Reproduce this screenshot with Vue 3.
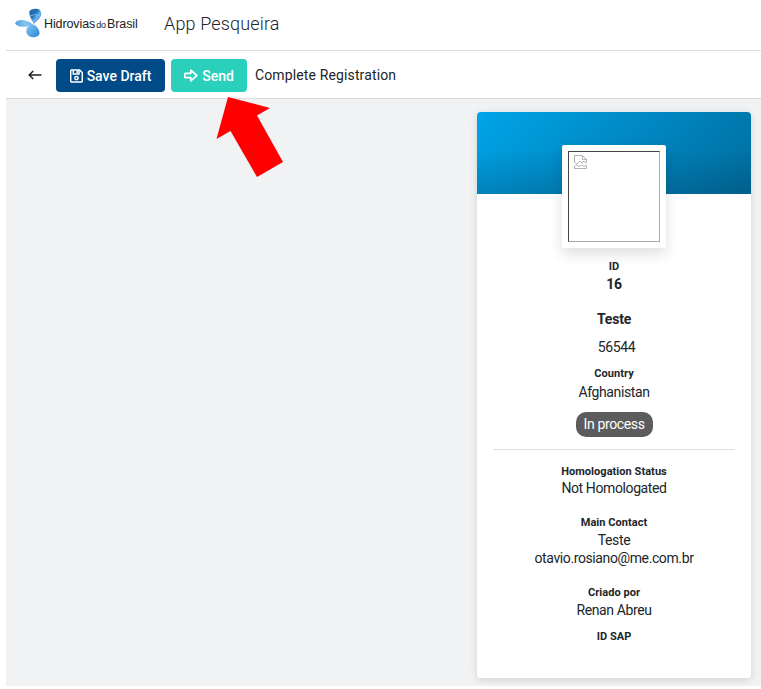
<script setup>
const identity = [
  { text: 'ID', kind: 'label' },
  { text: '16', kind: 'value strong' },
  { text: 'Teste', kind: 'value strong name' },
  { text: '56544', kind: 'value code' },
  { text: 'Country', kind: 'label country' },
  { text: 'Afghanistan', kind: 'value spaced' },
]
const details = [
  { key: 'status', label: 'Homologation Status', values: ['Not Homologated'] },
  { key: 'contact', label: 'Main Contact', values: ['Teste', 'otavio.rosiano@me.com.br'] },
  { key: 'author', label: 'Criado por', values: ['Renan Abreu'] },
  { key: 'sap', label: 'ID SAP', values: [] },
]
</script>

<template>
  <div class="page">
    <header class="header">
      <svg class="logo-mark" viewBox="0 0 28 30">
        <defs>
          <linearGradient id="bladeTop" x1="0" y1="0" x2="1" y2="1">
            <stop offset="0" stop-color="#1d65a8" />
            <stop offset=".4" stop-color="#2673b5" />
            <stop offset=".6" stop-color="#69b5ed" />
            <stop offset="1" stop-color="#1f6db5" />
          </linearGradient>
          <linearGradient id="bladeLeft" x1="0" y1="0" x2="1" y2="0">
            <stop offset="0" stop-color="#4ba1e4" />
            <stop offset=".55" stop-color="#86c3f2" />
            <stop offset="1" stop-color="#6fb4ee" />
          </linearGradient>
          <linearGradient id="bladeBottom" x1="0" y1="0" x2="1" y2="1">
            <stop offset="0" stop-color="#8cc8f4" />
            <stop offset="1" stop-color="#2385d5" />
          </linearGradient>
        </defs>
        <path d="M14.500 3C18-.5 26 0 26.300 5C26.500 10 22 13 18.500 16C18 12 13.500 9 14.500 3Z" fill="url(#bladeTop)" />
        <path d="M0 15.500C2 10.500 11 11 18 16.500C13 18 12 19 7 18.800C4 18.500 1 17.500 0 15.500Z" fill="url(#bladeLeft)" />
        <path d="M17 16C21 17 25 21 24.500 26C22 31 13 30 11.500 25C10.500 22 12 18 17 16Z" fill="url(#bladeBottom)" />
        <path d="M15 8Q20 5 25 8" fill="none" stroke="#8cc8f4" stroke-width=".7" />
      </svg>
      <span class="brand">Hidrovias<small>do</small>Brasil</span>
      <span class="app-name">App Pesqueira</span>
    </header>

    <div class="toolbar">
      <svg class="back" viewBox="0 0 14 10">
        <path d="M13.500 5H1.500M5.200 1L1.200 5L5.200 9" fill="none" stroke="#222" stroke-width="1.500" />
      </svg>
      <button class="btn save">
        <svg class="save-icon" viewBox="0 0 13 14" fill="none" stroke="#fff" stroke-width="1.500">
          <path d="M1.700 1H9.600L12.300 3.700V12Q12.300 13 11.300 13H1.700Q.7 13 .7 12V2Q.7 1 1.700 1Z" />
          <path d="M3.300 1V5H9V1M7.200 1.500V4" />
          <circle cx="6.500" cy="9.100" r="1.700" />
        </svg>
        <span>Save Draft</span>
      </button>
      <button class="btn send">
        <svg class="send-icon" viewBox="0 0 14 13">
          <path d="M1.600 4.300H6.800V1.200L12.800 6.500L6.800 11.800V8.700H1.600Q.8 8.700 .8 7.900V5.100Q.8 4.300 1.600 4.300Z" fill="none" stroke="#fff" stroke-width="1.700" stroke-linejoin="round" />
        </svg>
        <span>Send</span>
      </button>
      <span class="title">Complete Registration</span>
      <svg class="pointer" viewBox="0 0 68 82">
        <path d="M12 0L54 11L41 18.500L67 65L41 80L14.500 34L.5 42Z" fill="#f00" />
      </svg>
    </div>

    <main class="content">
      <section class="card">
        <div class="banner">
          <div class="avatar">
            <div class="picture">
              <svg class="broken" viewBox="0 0 13 15" fill="none" stroke="#b4b4b4" stroke-width="1">
                <path d="M.5 7.500V.5H8.500L12.500 4.500V8M8.500 .5V4.500H12.500M.5 7.500L3 9L6 6L8 8L10 6L12.500 8M.5 13.500V11.500L3 10L5 11.500L7.500 10L10 11.500L12.500 10.500V13.500Z" />
              </svg>
            </div>
          </div>
        </div>
        <div class="info">
          <div v-for="row in identity" :key="row.kind" :class="row.kind">{{ row.text }}</div>
          <span class="badge">In process</span>
          <hr class="rule">
          <div v-for="group in details" :key="group.key" class="group" :class="group.key">
            <div class="label">{{ group.label }}</div>
            <div v-for="value in group.values" :key="value" class="value">{{ value }}</div>
          </div>
        </div>
      </section>
    </main>
  </div>
</template>

<style>
body {
  margin: 0;
  background: #fff;
}
</style>

<style scoped>
.page {
  box-sizing: border-box;
  height: 689px;
  padding: 0 0 3px 6px;
  display: flex;
  flex-direction: column;
  overflow: hidden;
  font-family: Roboto, "Liberation Sans", sans-serif;
  color: #212529;
}
.header {
  box-sizing: border-box;
  height: 51px;
  flex: none;
  display: flex;
  align-items: center;
  padding: 0 0 4px 9px;
  border-bottom: 1px solid #dcdddf;
  white-space: nowrap;
}
.logo-mark {
  width: 28px;
  height: 30px;
}
.brand {
  box-sizing: border-box;
  width: 121px;
  padding: 2px 0 0 1px;
  font-family: "Liberation Sans", Arial, sans-serif;
  font-size: 12.500px;
  letter-spacing: -0.100px;
  color: #222;
}
.brand small {
  font-size: 9px;
  margin: 0 1px;
}
.app-name {
  font-size: 18px;
  font-weight: 300;
  letter-spacing: 0.150px;
}
.toolbar {
  position: relative;
  z-index: 2;
  box-sizing: border-box;
  height: 48px;
  flex: none;
  display: flex;
  align-items: center;
  padding-left: 22px;
  border-bottom: 1px solid #d9dbdd;
  white-space: nowrap;
}
.back {
  width: 14px;
  height: 10px;
  margin: 1px 14px 0 0;
}
.btn {
  box-sizing: border-box;
  height: 33px;
  margin: 2px 6px 0 0;
  padding: 0;
  border: 0;
  border-radius: 4px;
  display: flex;
  align-items: center;
  justify-content: center;
  gap: 4px;
  font: 500 14px Roboto, sans-serif;
  color: #fff;
}
.save {
  width: 109px;
  background: #004b87;
}
.send {
  width: 76px;
  background: #2bd0bc;
}
.save-icon {
  width: 13px;
  height: 14px;
}
.send-icon {
  width: 14px;
  height: 13px;
}
.title {
  margin-left: 2px;
  font-size: 14px;
  letter-spacing: 0.130px;
}
.pointer {
  position: absolute;
  left: 209.500px;
  top: 46px;
  width: 68px;
  height: 82px;
}
.content {
  flex: 1;
  display: flex;
  justify-content: flex-end;
  padding: 13px 10px 8px 0;
  background: #f1f2f4;
}
.card {
  width: 274px;
  border-radius: 4px;
  background: #fff;
  box-shadow: 0 2px 8px rgba(0, 0, 0, 0.13);
}
.banner {
  box-sizing: border-box;
  height: 82px;
  padding: 33px 0 0 85px;
  border-radius: 4px 4px 0 0;
  background: linear-gradient(180deg, transparent 45%, rgba(0, 35, 60, 0.180)), linear-gradient(135deg, #00a5e9, #006c9d);
}
.avatar {
  box-sizing: border-box;
  width: 104px;
  height: 103px;
  padding: 6px;
  border-radius: 2px;
  background: #fff;
  box-shadow: 0 6px 14px rgba(0, 0, 0, 0.13);
}
.picture {
  box-sizing: border-box;
  height: 91px;
  padding: 3px 5px;
  border: 1px solid #aaa;
  border-top-color: #444;
  border-left-color: #444;
}
.broken {
  display: block;
  width: 13px;
  height: 15px;
}
.info {
  display: flex;
  flex-direction: column;
  align-items: center;
  padding: 65px 16px 0;
  text-align: center;
}
.label {
  font-size: 11px;
  font-weight: 700;
  line-height: 16px;
  letter-spacing: 0.050px;
}
.value {
  font-size: 14px;
  line-height: 18px;
  letter-spacing: -0.390px;
}
.strong {
  font-weight: 700;
  letter-spacing: -0.200px;
}
.name {
  margin-top: 17px;
}
.code {
  margin: 10px 0 0 5px;
}
.country {
  margin-top: 10px;
}
.spaced {
  margin-top: 1px;
}
.badge {
  margin-top: 11px;
  width: 77px;
  height: 25px;
  border-radius: 10px;
  background: #5c5c5c;
  color: #fff;
  font-size: 14px;
  letter-spacing: -0.360px;
  line-height: 25px;
}
.rule {
  width: 242px;
  height: 1px;
  margin: 12px 0 14px;
  border: 0;
  background: #dedfe0;
}
.status .value {
  margin-top: -1px;
}
.contact {
  margin-top: 18px;
}
.author {
  margin-top: 18px;
}
.sap {
  margin-top: 10px;
}
</style>
